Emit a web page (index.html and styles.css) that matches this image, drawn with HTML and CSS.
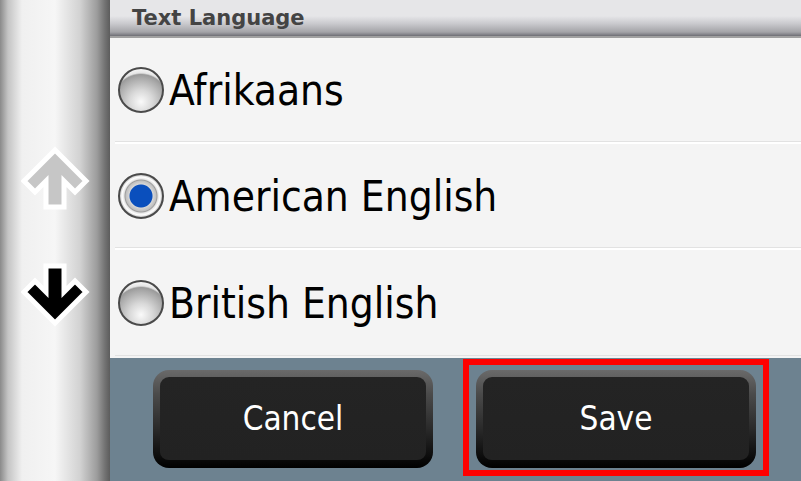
FILE: index.html
```html
<!DOCTYPE html>
<html lang="en">
<head>
    <meta charset="UTF-8">
    <title>Text Language</title>
    <link rel="stylesheet" href="styles.css">
</head>
<body>
    <div class="pantalla">
        <div class="lateral">
            <svg class="flecha arriba" width="70" height="68" viewBox="0 0 70 68">
                <polygon points="34,4 65,35 54,46 43,35 43,61 25,61 25,35 14,46 3,35" />
            </svg>
            <svg class="flecha abajo" width="70" height="68" viewBox="0 0 70 68">
                <polygon points="34,61 3,30 14,19 25,30 25,4 43,4 43,30 54,19 65,30" />
            </svg>
        </div>
        <div class="principal">
            <div class="cabecera">Text Language</div>
            <div class="lista">
                <div class="fila">
                    <span class="radio"></span>
                    <span class="etiqueta">Afrikaans</span>
                </div>
                <div class="fila">
                    <span class="radio marcado"></span>
                    <span class="etiqueta">American English</span>
                </div>
                <div class="fila">
                    <span class="radio"></span>
                    <span class="etiqueta">British English</span>
                </div>
            </div>
            <div class="pie">
                <div class="boton cancelar">Cancel</div>
                <div class="seleccion">
                    <div class="boton">Save</div>
                </div>
            </div>
        </div>
    </div>
</body>
</html>
```

FILE: styles.css
```css
/* Pantalla completa */
body {
    margin: 0;
    font-family: "DejaVu Sans Condensed", "DejaVu Sans", sans-serif;
    font-stretch: condensed;
}

.pantalla {
    display: flex;
    width: 801px;
    height: 481px;
    overflow: hidden;
}

/* Barra lateral con las flechas */
.lateral {
    width: 110px;
    flex-shrink: 0;
    display: flex;
    flex-direction: column;
    padding: 146px 0 0 21px;
    box-sizing: border-box;
    gap: 48px;
    background: linear-gradient(to right, #8a8a8a 0, #c4c4c4 8px, #f0f0f0 22px, #f6f6f6 55px, #d2d2d2 80px, #9c9c9c 97px, #727272 105px, #5c5c5c 110px);
}

.flecha polygon {
    stroke: #fff;
    stroke-width: 5;
    stroke-linejoin: miter;
}

.arriba polygon {
    fill: #c6c6c6;
}

.abajo polygon {
    fill: #000;
}

.principal {
    flex: 1;
    display: flex;
    flex-direction: column;
}

/* Titulo */
.cabecera {
    height: 36px;
    line-height: 36px;
    padding-left: 22px;
    font-family: "DejaVu Sans", sans-serif;
    font-stretch: normal;
    font-weight: bold;
    font-size: 21px;
    color: #444;
    background: linear-gradient(#e6e6e8 0, #e6e6e8 16px, #c8c8cc 24px, #a4a4a8 32px, #8a8a90 34px, #6e6e74 36px);
    border-bottom: 2px solid #a0a0a0;
}

/* Lista de idiomas */
.lista {
    height: 320px;
    background: #f4f4f4;
}

.fila {
    height: 104px;
    margin-left: 5px;
    padding-left: 3px;
    display: flex;
    align-items: center;
    gap: 5px;
    border-bottom: 2px solid #fff;
    box-shadow: inset 0 -1px 0 #e2e2e2;
}

.fila:last-child {
    border-bottom: none;
    height: 106px;
}

.radio {
    width: 46px;
    height: 46px;
    box-sizing: border-box;
    border-radius: 50%;
    border: 2px solid #4a4a4a;
    background: radial-gradient(circle at 50% 78%, #fafafa 0, #d8d8d8 30%, #a8a8a8 62%, #9a9a9a 70%, #e4e4e4 74%, #ffffff 88%, #c8c8c8 100%);
    flex-shrink: 0;
}

.radio.marcado {
    background: radial-gradient(circle, #0a4fbd 0, #0a4fbd 11px, #d6d6d6 12px, #c0c0c0 15px, #9c9c9c 16px, #e6e6e6 17px, #ffffff 19px, #c8c8c8 21px);
}

.etiqueta {
    font-size: 42px;
    color: #000;
}

/* Botones inferiores */
.pie {
    flex: 1;
    background: #6d8290;
    display: flex;
    align-items: flex-start;
    padding: 1px 0 0 43px;
    gap: 30px;
}

.boton {
    width: 280px;
    height: 98px;
    box-sizing: border-box;
    border: 7px solid transparent;
    border-bottom-width: 8px;
    border-radius: 16px;
    background: linear-gradient(#242424, #222) padding-box, linear-gradient(#6a6a6a 0, #4a4a4a 25%, #2a2a2a 60%, #000 100%) border-box;
    color: #fff;
    font-size: 33px;
    display: flex;
    align-items: center;
    justify-content: center;
}

.cancelar {
    margin-top: 11px;
}

/* Marco rojo del boton seleccionado */
.seleccion {
    border: 6px solid #ff0000;
    padding: 5px 7px 2px 7px;
}
```
